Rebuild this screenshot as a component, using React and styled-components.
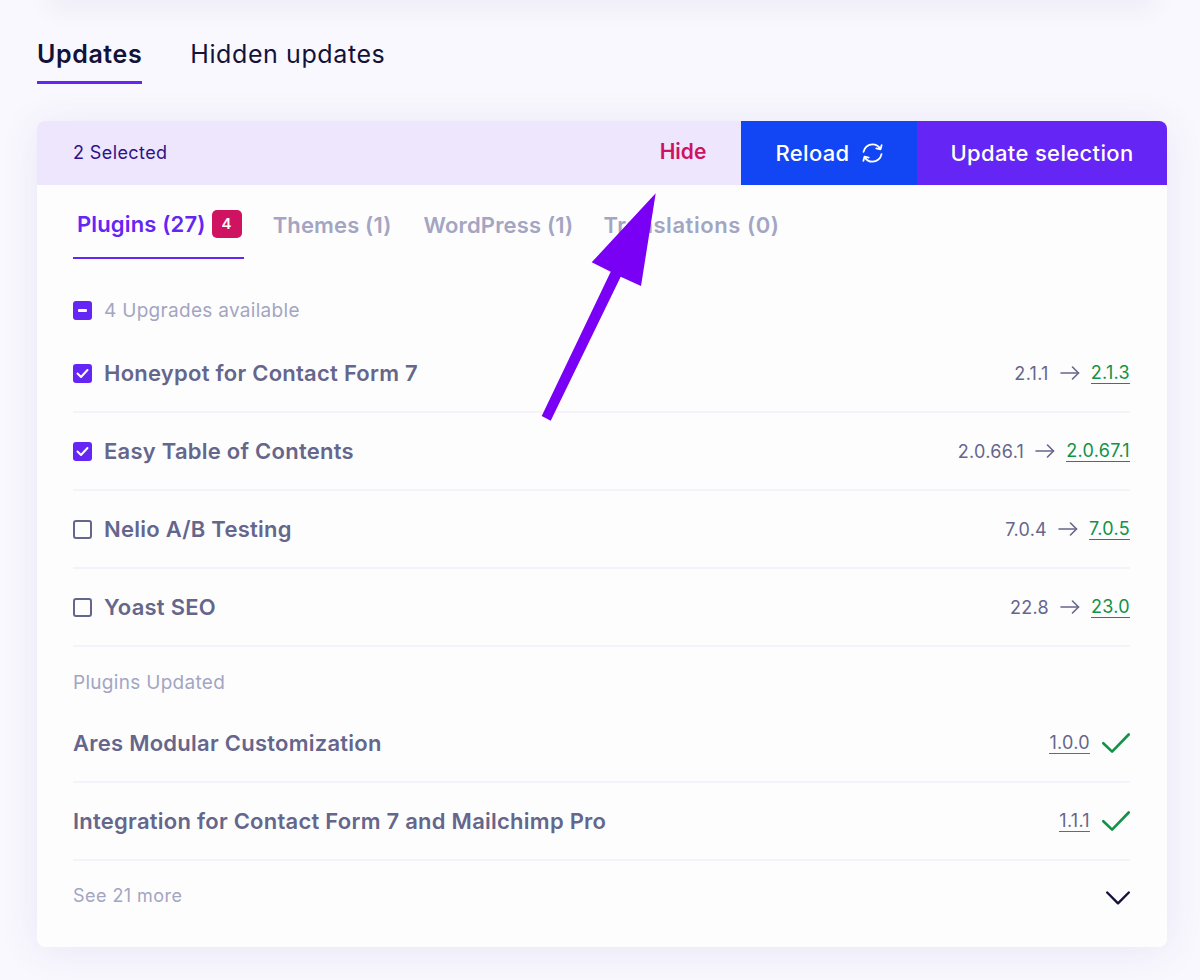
import React from "react";
import styled, { createGlobalStyle } from "styled-components";

const GlobalStyle = createGlobalStyle`
  html, body {
    margin: 0;
    padding: 0;
    background: #f9f8fe;
    font-family: "Inter", "Liberation Sans", sans-serif;
    overflow: hidden;
  }
`;

const Page = styled.div`
  position: relative;
  width: 1200px;
  height: 980px;
  overflow: hidden;
  box-sizing: border-box;
  padding: 0 33px 0 37px;
`;
const TopShade = styled.div`
  position: absolute;
  top: -20px;
  left: 50px;
  right: 46px;
  height: 20px;
  box-shadow: 0 8px 24px rgba(60, 50, 110, 0.07);
`;
const MainTabs = styled.div`
  display: flex;
  gap: 48px;
  padding-top: 36px;
  height: 48px;
`;
const MainTab = styled.div`
  height: 48px;
  box-sizing: border-box;
  font-size: 25px;
  line-height: 36px;
  letter-spacing: 0.6px;
  font-weight: ${(p) => (p.$active ? 600 : 400)};
  color: #13123a;
  border-bottom: ${(p) => (p.$active ? "3px solid #6425f5" : "none")};
`;
const Card = styled.div`
  margin-top: 37px;
  height: 826px;
  background: #fdfdfe;
  border-radius: 8px;
  box-shadow: 0 4px 40px rgba(70, 60, 150, 0.09);
  overflow: hidden;
`;
const Toolbar = styled.div`
  display: flex;
  align-items: stretch;
  height: 64px;
  background: #ede6fd;
`;
const Selected = styled.div`
  flex: 1;
  padding-left: 36px;
  font-size: 18px;
  letter-spacing: 0.4px;
  line-height: 63px;
  color: #2e1288;
`;
const HideButton = styled.div`
  width: 48px;
  margin-right: 34px;
  font-size: 21px;
  font-weight: 600;
  line-height: 62px;
  text-align: center;
  color: #cf1263;
`;
const ActionButton = styled.div`
  display: flex;
  align-items: center;
  justify-content: center;
  gap: 12px;
  width: ${(p) => p.$width}px;
  font-size: 22px;
  font-weight: 500;
  letter-spacing: 0.35px;
  color: #fff;
  background: ${(p) => p.$bg};
`;
const Body = styled.div`
  padding: 0 37px 0 36px;
`;
const SubTabs = styled.div`
  display: flex;
  align-items: flex-start;
  height: 74px;
  gap: 29px;
`;
const SubTab = styled.div`
  display: flex;
  align-items: center;
  gap: 6px;
  box-sizing: border-box;
  height: 74px;
  padding: 5px ${(p) => (p.$active ? "2px" : "0")} 0 ${(p) => (p.$active ? "4px" : "0")};
  font-size: 22px;
  font-weight: 600;
  letter-spacing: ${(p) => p.$spacing || 0.15}px;
  margin-right: ${(p) => p.$after || 0}px;
  color: ${(p) => (p.$active ? "#6425f5" : "#a3a5c2")};
  border-bottom: ${(p) => (p.$active ? "2px solid #6425f5" : "none")};
`;
const Badge = styled.span`
  display: inline-flex;
  align-items: center;
  justify-content: center;
  width: 30px;
  height: 28px;
  border-radius: 5px;
  background: #d01361;
  color: #fff;
  font-size: 15px;
  font-weight: 600;
`;
const GroupHead = styled.div`
  display: flex;
  align-items: center;
  gap: 12px;
  height: 40px;
  margin: 31px 0 5px;
  font-size: 19px;
  letter-spacing: 0.3px;
  color: #a3a5c2;
`;
const Box = styled.span`
  display: inline-flex;
  align-items: center;
  justify-content: center;
  flex: none;
  box-sizing: border-box;
  width: 19px;
  height: 19px;
  border-radius: 3px;
  color: #fff;
  background: ${(p) => (p.$on ? "#6425f5" : "transparent")};
  border: ${(p) => (p.$on ? "none" : "2px solid #65668b")};
`;
const Dash = styled.span`
  width: 9px;
  height: 3px;
  background: #fff;
  border-radius: 1px;
`;
const Row = styled.div`
  display: flex;
  align-items: center;
  justify-content: space-between;
  box-sizing: border-box;
  height: 78px;
  border-bottom: 2px solid #f3f3f9;
`;
const RowName = styled.div`
  display: flex;
  align-items: center;
  gap: 12px;
  font-size: 22px;
  font-weight: 600;
  letter-spacing: 0.25px;
  color: #65668b;
`;
const Versions = styled.div`
  display: flex;
  align-items: center;
  gap: 11px;
  font-size: 18px;
  letter-spacing: 0.3px;
  color: #65668b;
`;
const VersionLink = styled.span`
  border-bottom: 1.5px solid currentColor;
  line-height: 21px;
  color: ${(p) => (p.$green ? "#119247" : "#65668b")};
`;
const SectionLabel = styled.div`
  height: 58px;
  padding-top: 22px;
  box-sizing: border-box;
  font-size: 19px;
  letter-spacing: 0.3px;
  line-height: 28px;
  color: #a3a5c2;
`;
const SeeMore = styled.div`
  display: flex;
  align-items: center;
  justify-content: space-between;
  height: 69px;
  font-size: 18px;
  letter-spacing: 0.45px;
  color: #a3a5c2;
`;
const ChevronIcon = styled.svg`
  margin-top: 5px;
`;
const DoneIcon = styled.svg`
  margin-left: 1px;
`;
const Overlay = styled.svg`
  position: absolute;
  left: 0;
  top: 0;
  pointer-events: none;
`;

const pending = [
  { name: "Honeypot for Contact Form 7", from: "2.1.1", to: "2.1.3", on: true },
  { name: "Easy Table of Contents", from: "2.0.66.1", to: "2.0.67.1", on: true },
  { name: "Nelio A/B Testing", from: "7.0.4", to: "7.0.5", on: false },
  { name: "Yoast SEO", from: "22.8", to: "23.0", on: false },
];
const done = [
  { name: "Ares Modular Customization", version: "1.0.0" },
  { name: "Integration for Contact Form 7 and Mailchimp Pro", version: "1.1.1" },
];

function ReloadIcon() {
  return (
    <svg width="21" height="20" viewBox="0 0 21 20" fill="none" stroke="#fff" strokeWidth="1.8" strokeLinecap="round" strokeLinejoin="round">
      <path d="M1.5 8.8C2.3 4.5 6 1.3 10.5 1.3c3.3 0 6.2 1.8 7.8 4.5" />
      <path d="M19.6 2.2l-1.1 4.1-4.2-.9" />
      <path d="M19.5 11.2c-.8 4.3-4.5 7.5-9 7.5-3.3 0-6.2-1.8-7.8-4.5" />
      <path d="M1.4 17.8l1.1-4.1 4.2.9" />
    </svg>
  );
}

function BoxTick() {
  return (
    <svg width="13" height="11" viewBox="0 0 13 11" fill="none" stroke="#fff" strokeWidth="2" strokeLinecap="round" strokeLinejoin="round">
      <path d="M1.5 5.5 5 9l6.5-7" />
    </svg>
  );
}

function VersionArrow() {
  return (
    <svg width="20" height="14" viewBox="0 0 20 14" fill="none" stroke="#65668b" strokeWidth="1.6" strokeLinecap="round" strokeLinejoin="round">
      <path d="M1 7h17.5" />
      <path d="M12.5 1l6 6-6 6" />
    </svg>
  );
}

function App() {
  return (
    <Page>
      <GlobalStyle />
      <TopShade />
      <MainTabs>
        <MainTab $active>Updates</MainTab>
        <MainTab>Hidden updates</MainTab>
      </MainTabs>
      <Card>
        <Toolbar>
          <Selected>2 Selected</Selected>
          <HideButton>Hide</HideButton>
          <ActionButton $width={176} $bg="#1246f5">
            Reload <ReloadIcon />
          </ActionButton>
          <ActionButton $width={250} $bg="#6425f5">
            Update selection
          </ActionButton>
        </Toolbar>
        <Body>
          <SubTabs>
            <SubTab $active>
              Plugins (27) <Badge>4</Badge>
            </SubTab>
            <SubTab $after={3}>Themes (1)</SubTab>
            <SubTab $after={1}>WordPress (1)</SubTab>
            <SubTab $spacing={0.55}>Translations (0)</SubTab>
          </SubTabs>
          <GroupHead>
            <Box $on>
              <Dash />
            </Box>
            4 Upgrades available
          </GroupHead>
          {pending.map((item) => (
            <Row key={item.name}>
              <RowName>
                <Box $on={item.on}>{item.on && <BoxTick />}</Box>
                {item.name}
              </RowName>
              <Versions>
                {item.from}
                <VersionArrow />
                <VersionLink $green>{item.to}</VersionLink>
              </Versions>
            </Row>
          ))}
          <SectionLabel>Plugins Updated</SectionLabel>
          {done.map((item) => (
            <Row key={item.name}>
              <RowName>{item.name}</RowName>
              <Versions>
                <VersionLink>{item.version}</VersionLink>
                <DoneIcon width="28" height="20" viewBox="0 0 28 20" fill="none" stroke="#119247" strokeWidth="2.6" strokeLinecap="round" strokeLinejoin="round">
                  <path d="M1.3 10.2l8.8 8.4L26.7 1.5" />
                </DoneIcon>
              </Versions>
            </Row>
          ))}
          <SeeMore>
            See 21 more
            <ChevronIcon width="24" height="14" viewBox="0 0 24 14" fill="none" stroke="#13123a" strokeWidth="2.4" strokeLinecap="round" strokeLinejoin="round">
              <path d="M1.2 1.5 12 12.3 22.8 1.5" />
            </ChevronIcon>
          </SeeMore>
        </Body>
      </Card>
      <Overlay width="1200" height="980" viewBox="0 0 1200 980">
        <path
          d="M655.7 193.3 641 286 620.7 276.7 550.7 420.7 541.7 416 610.7 271.7 591.7 262.3Z"
          fill="#7a00f5"
        />
      </Overlay>
    </Page>
  );
}

export default App;
